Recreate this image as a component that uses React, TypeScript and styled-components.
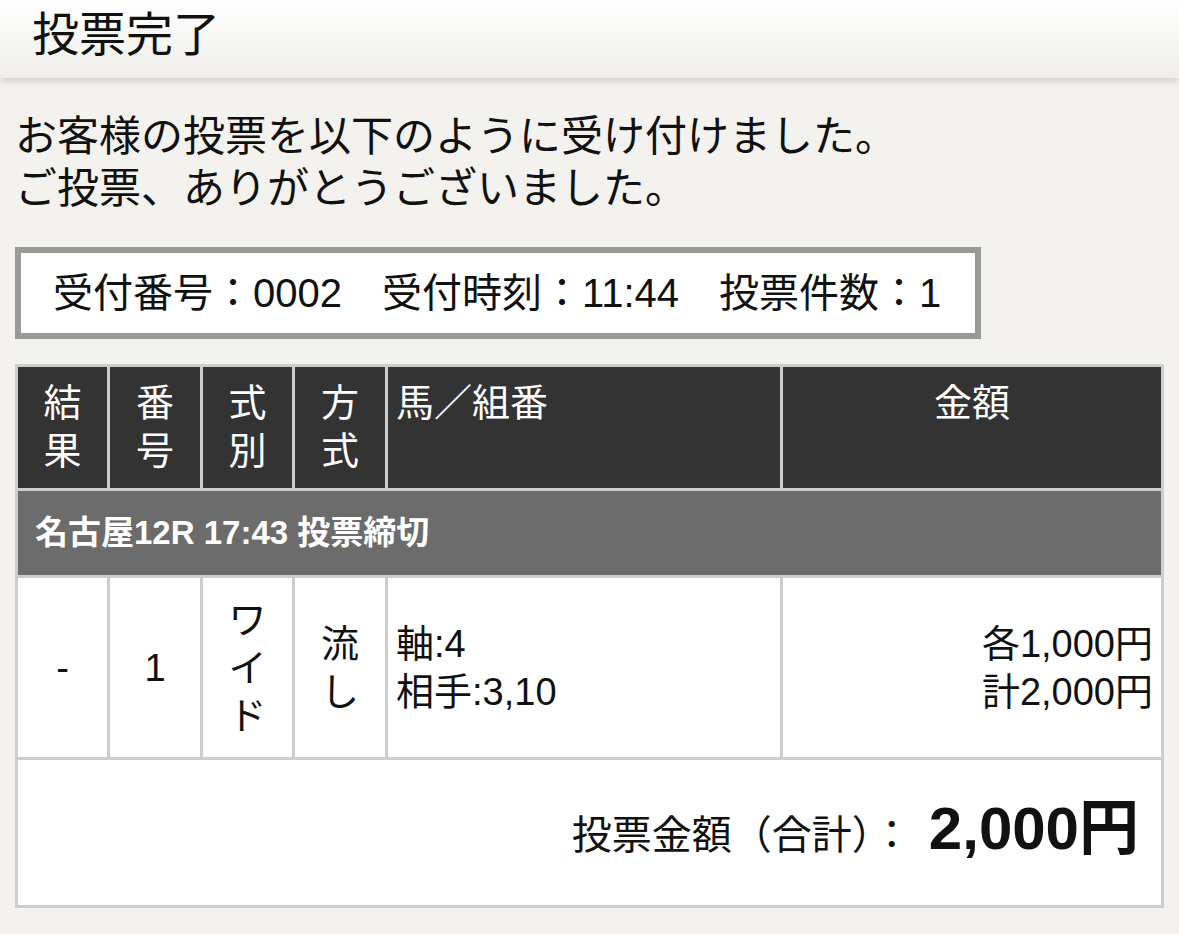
import React from 'react';
import styled, { createGlobalStyle } from 'styled-components';

const GlobalStyle = createGlobalStyle`
  body {
    margin: 0;
    background: #f3f2ee;
    color: #111;
    font-family: 'Liberation Sans', 'Noto Sans CJK JP', sans-serif;
  }
`;

const StyledHeader = styled.header`
  height: 78px;
  padding-left: 32px;
  background: linear-gradient(#ffffff, #efeeea);
  box-shadow: 0 3px 7px rgba(60, 50, 40, 0.18);
  font-size: 47px;
  line-height: 70px;
`;

const StyledContent = styled.main`
  padding: 0 15px 30px;
`;

const StyledMessage = styled.p`
  margin: 33px 0 32px;
  font-size: 42px;
  line-height: 52px;
`;

const StyledReceipt = styled.div`
  display: inline-block;
  box-sizing: border-box;
  height: 92px;
  padding: 0 34px 0 32px;
  border: 6px solid #999;
  background: #fff;
  font-size: 40px;
  line-height: 80px;
  white-space: pre;
`;

const StyledTable = styled.table`
  width: 100%;
  margin-top: 25px;
  table-layout: fixed;
  border-collapse: separate;
  border-spacing: 3px;
  background: #cdcdcd;
  font-size: 38px;
  line-height: 48px;
`;

const StyledHeadCell = styled.th<{ align?: string }>`
  padding: 12px 8px 13px;
  background: #333;
  color: #fff;
  font-weight: normal;
  vertical-align: top;
  text-align: ${({ align }) => align || 'center'};
`;

const StyledRaceCell = styled.td`
  height: 84px;
  padding: 0 17px;
  background: #6c6c6c;
  color: #fff;
  font-size: 33px;
  font-weight: bold;
`;

const StyledCell = styled.td<{ align?: string }>`
  height: 179px;
  padding: 0 8px;
  background: #fff;
  text-align: ${({ align }) => align || 'center'};
  vertical-align: middle;
`;

const StyledTotalCell = styled.td`
  height: 145px;
  padding: 0 22px 0 8px;
  background: #fff;
  text-align: right;
  vertical-align: middle;
`;

const StyledTotalLabel = styled.span`
  font-size: 40px;
`;

const StyledTotalValue = styled.span`
  margin-left: 17px;
  font-size: 60px;
  font-weight: bold;
`;

const columns = [89, 90, 89, 90, 392];

const App: React.FC = () => (
  <>
    <GlobalStyle />
    <StyledHeader>投票完了</StyledHeader>
    <StyledContent>
      <StyledMessage>
        お客様の投票を以下のように受け付けました。
        <br />
        ご投票、ありがとうございました。
      </StyledMessage>
      <StyledReceipt>受付番号：0002　受付時刻：11:44　投票件数：1</StyledReceipt>
      <StyledTable>
        <colgroup>
          {columns.map((w) => (
            <col key={w} style={{ width: w }} />
          ))}
          <col />
        </colgroup>
        <thead>
          <tr>
            <StyledHeadCell>結果</StyledHeadCell>
            <StyledHeadCell>番号</StyledHeadCell>
            <StyledHeadCell>式別</StyledHeadCell>
            <StyledHeadCell>方式</StyledHeadCell>
            <StyledHeadCell align="left">馬／組番</StyledHeadCell>
            <StyledHeadCell>金額</StyledHeadCell>
          </tr>
        </thead>
        <tbody>
          <tr>
            <StyledRaceCell colSpan={6}>名古屋12R 17:43 投票締切</StyledRaceCell>
          </tr>
          <tr>
            <StyledCell>-</StyledCell>
            <StyledCell>1</StyledCell>
            <StyledCell>ワイド</StyledCell>
            <StyledCell>流し</StyledCell>
            <StyledCell align="left">
              軸:4
              <br />
              相手:3,10
            </StyledCell>
            <StyledCell align="right">
              各1,000円
              <br />
              計2,000円
            </StyledCell>
          </tr>
          <tr>
            <StyledTotalCell colSpan={6}>
              <StyledTotalLabel>投票金額（合計）：</StyledTotalLabel>
              <StyledTotalValue>2,000円</StyledTotalValue>
            </StyledTotalCell>
          </tr>
        </tbody>
      </StyledTable>
    </StyledContent>
  </>
);

export default App;
